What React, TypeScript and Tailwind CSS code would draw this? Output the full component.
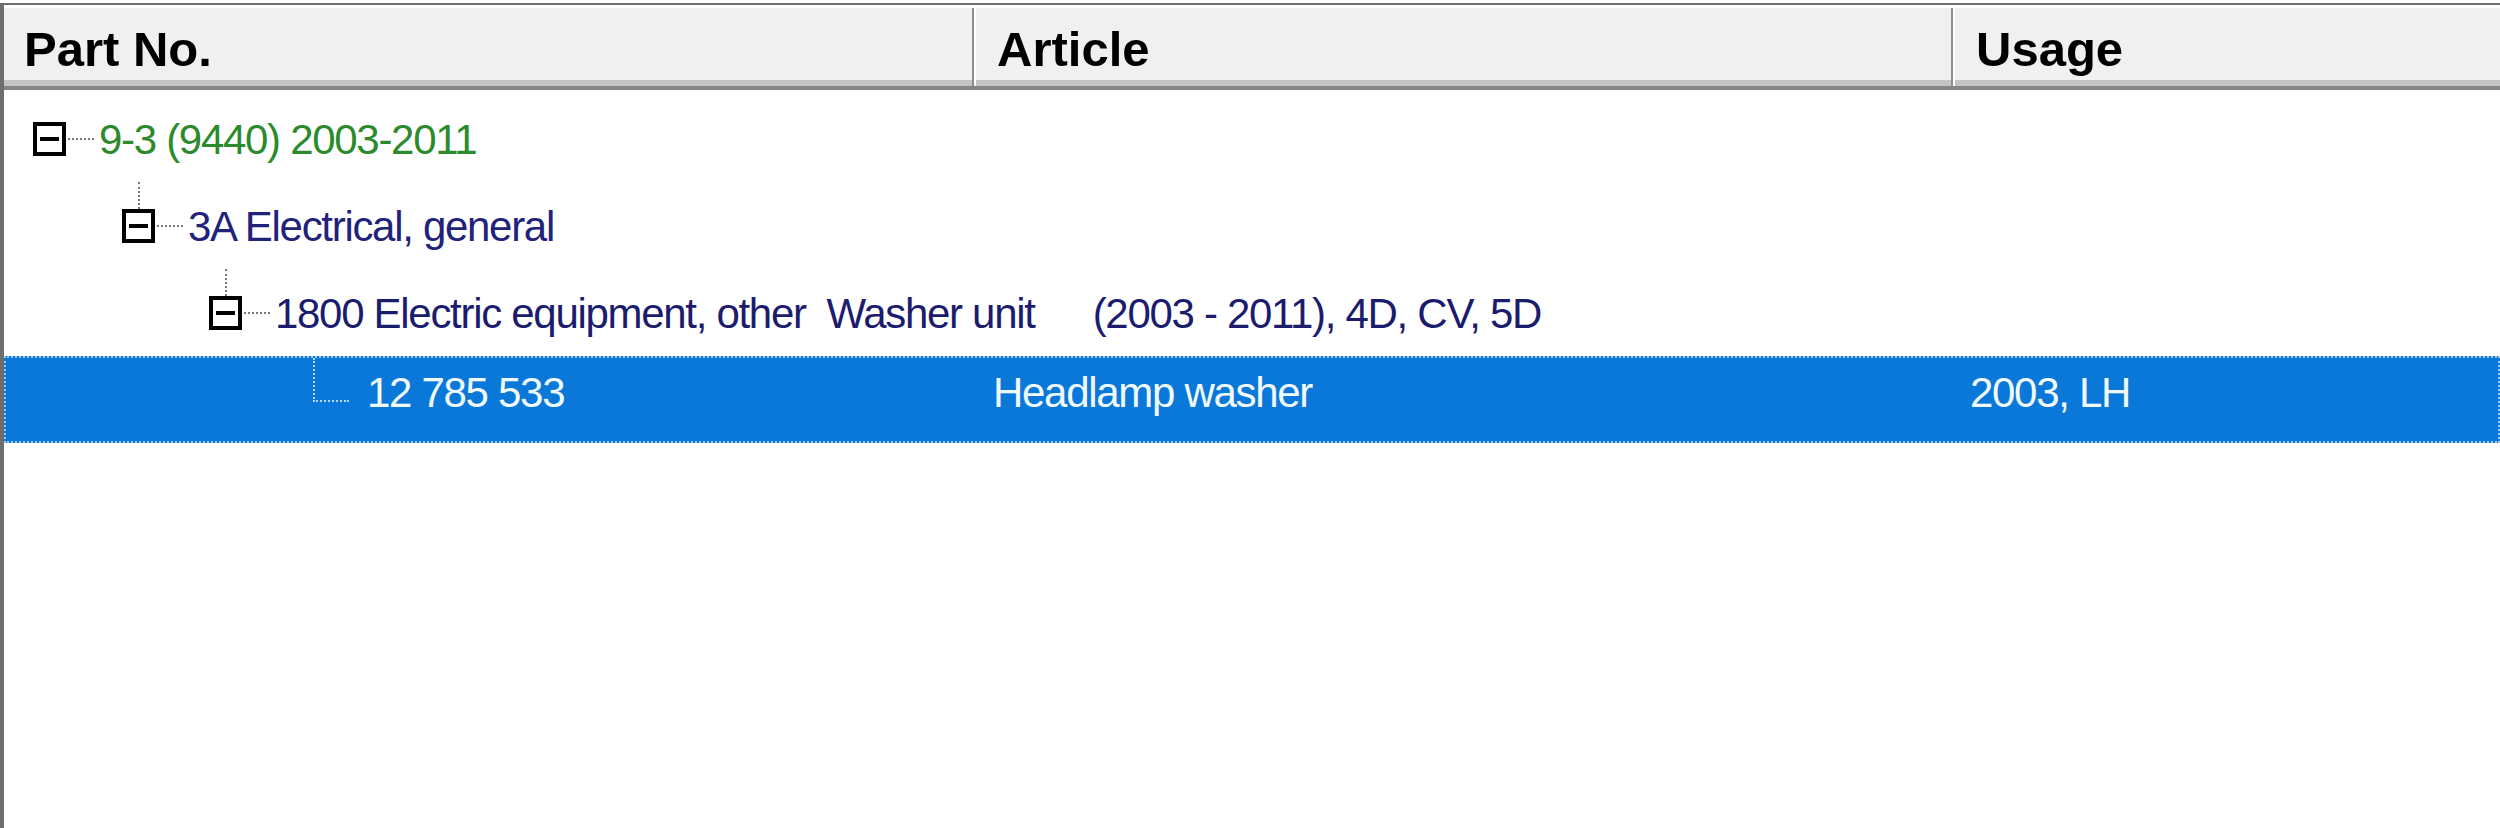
import React from 'react';

type Node = {
  level: 0 | 1 | 2;
  text: string;
  extra?: string;
  color: string;
  lineAbove: boolean;
};

const nodes: Node[] = [
  { level: 0, text: '9-3 (9440) 2003-2011', color: 'text-[#2b8a2b]', lineAbove: false },
  { level: 1, text: '3A Electrical, general', color: 'text-[#22227a]', lineAbove: true },
  {
    level: 2,
    text: '1800 Electric equipment, other  Washer unit',
    extra: '(2003 - 2011), 4D, CV, 5D',
    color: 'text-[#1c1c6e]',
    lineAbove: true,
  },
];

const indent: Record<number, string> = {
  0: 'pl-[29px]',
  1: 'pl-[118px]',
  2: 'pl-[205px]',
};

const font = "font-['Liberation_Sans',Arial,sans-serif]";

const ExpandBox: React.FC<{ lineAbove: boolean }> = ({ lineAbove }) => (
  <div className="flex flex-col items-center w-[33px]">
    <div className={`flex-1 ${lineAbove ? 'border-l-2 border-dotted border-[#777]' : ''}`} />
    <div className="w-[33px] h-[34px] border-[4px] border-black bg-white flex items-center justify-center">
      <div className="w-[19px] h-[4px] bg-black" />
    </div>
    <div className="flex-1" />
  </div>
);

const TreeRow: React.FC<{ node: Node }> = ({ node }) => (
  <div className={`h-[87px] flex items-stretch ${indent[node.level]}`}>
    <ExpandBox lineAbove={node.lineAbove} />
    <div className="self-center w-[26px] ml-[2px] border-t-2 border-dotted border-[#777]" />
    <div className={`self-center ml-[5px] pt-[3px] flex items-center ${node.color} text-[42px] leading-none tracking-[-1.3px] whitespace-pre`}>
      <span>{node.text}</span>
      {node.extra && <span className="ml-[58px]">{node.extra}</span>}
    </div>
  </div>
);

export default function App() {
  return (
    <div className={`w-[2500px] h-[828px] overflow-hidden bg-white pt-[3px] ${font}`}>
      <div className="h-[825px] flex flex-col border-t-2 border-l-4 border-[#6e6e6e]">
        {/* column headers */}
        <div className="h-[85px] shrink-0 flex bg-[#f0f0f0] border-t-[3px] border-white border-b-4 border-b-[#858585] shadow-[inset_0_-6px_0_#c4c4c4] text-[49px] font-bold text-black leading-none">
          <div className="w-[970px] flex items-center pl-[20px] pt-[4px] border-r-2 border-[#8e8e8e]">Part No.</div>
          <div className="w-[979px] flex items-center pl-[21px] pt-[4px] border-l-2 border-white border-r-2 border-r-[#8e8e8e]">Article</div>
          <div className="flex-1 flex items-center pl-[21px] pt-[4px] border-l-2 border-white">Usage</div>
        </div>

        {/* tree list */}
        <div className="flex-1 pt-[5px] flex flex-col">
          {nodes.map((n) => (
            <TreeRow key={n.text} node={n} />
          ))}

          <div className="h-[87px] flex border-2 border-dotted border-[#9cc8f2] bg-[#0a78d8] text-[#f0faff] text-[42px] leading-none tracking-[-1.3px]">
            <div className="w-[968px] flex pl-[307px]">
              <div className="w-[36px] h-[44px] border-l-2 border-b-2 border-dotted border-[#b8d8f6]" />
              <div className="self-center ml-[18px] pb-[14px]">12 785 533</div>
            </div>
            <div className="w-[979px] flex items-center pl-[19px] pb-[14px]">Headlamp washer</div>
            <div className="flex-1 flex items-center pl-[17px] pb-[14px]">2003, LH</div>
          </div>
        </div>
      </div>
    </div>
  );
}
